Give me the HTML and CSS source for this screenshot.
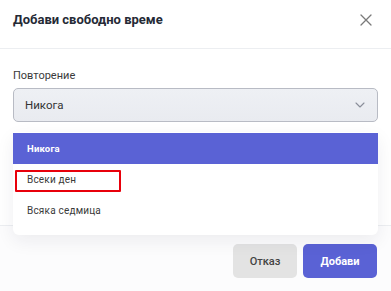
FILE: index.html
```html
<!DOCTYPE html>
<html lang="bg">
  <head>
    <meta charset="UTF-8" />
    <meta name="viewport" content="width=device-width, initial-scale=1.0" />
    <title>Добави свободно време</title>
    <link rel="stylesheet" href="styles.css">
  </head>
  <body>
    <div class="modal">
      <div class="modal-header">
        <h2>Добави свободно време</h2>
        <button class="close" aria-label="Затвори">
          <svg width="12" height="12" viewBox="0 0 12 12">
            <path d="M1 1 L11 11 M11 1 L1 11" stroke="#7a7a7a" stroke-width="1.3" fill="none" stroke-linecap="round" />
          </svg>
        </button>
      </div>

      <div class="modal-body">
        <label class="field-label">Повторение</label>
        <div class="select">
          <span>Никога</span>
          <svg width="10" height="6" viewBox="0 0 10 6">
            <path d="M1 1 L5 5 L9 1" stroke="#8a8e99" stroke-width="1.1" fill="none" stroke-linecap="round" stroke-linejoin="round" />
          </svg>
        </div>

        <ul class="options">
          <li class="option active">Никога</li>
          <li class="option">Всеки ден<span class="mark"></span></li>
          <li class="option">Всяка седмица</li>
        </ul>
      </div>

      <div class="modal-footer">
        <button class="btn btn-cancel">Отказ</button>
        <button class="btn btn-primary">Добави</button>
      </div>
    </div>
  </body>
</html>
```

FILE: styles.css
```css
body {
  margin: 0;
  font-family: Roboto, "Noto Sans", sans-serif;
  background: #fff;
  color: #333;
}
.modal {
  width: 391px;
  height: 291px;
  background: #fff;
  overflow: hidden;
}
.modal-header {
  height: 49px;
  box-sizing: border-box;
  padding: 11px 13px 0;
  display: flex;
  justify-content: space-between;
  align-items: flex-start;
  border-bottom: 1px solid #eceef1;
}
.modal-header h2 {
  margin: 0;
  font-size: 13px;
  line-height: 18px;
  font-weight: 700;
  color: #252a36;
}
.close {
  border: none;
  background: none;
  padding: 0;
  margin: 3px 6px 0 0;
  width: 12px;
  height: 12px;
  cursor: pointer;
}
.modal-body {
  position: relative;
  padding: 19px 13px 103px;
}
.field-label {
  display: block;
  font-size: 11px;
  line-height: 15px;
  color: #3a3a3a;
  margin-bottom: 5px;
}
.select {
  height: 34px;
  box-sizing: border-box;
  border: 1px solid #b8bbc4;
  border-radius: 5px;
  background: linear-gradient(#eef0f4, #e9ebf0);
  display: flex;
  align-items: center;
  justify-content: space-between;
  padding: 0 12px 0 11px;
  font-size: 11.5px;
  color: #333;
}
.options {
  position: absolute;
  top: 83px;
  left: 13px;
  right: 13px;
  margin: 0;
  padding: 1px 0 9px;
  list-style: none;
  background: #fff;
  border-radius: 0 0 6px 6px;
  box-shadow: 0 6px 18px rgba(30, 35, 60, 0.07);
}
.option {
  position: relative;
  height: 31px;
  display: flex;
  align-items: center;
  padding: 0 14px;
  font-size: 10px;
  letter-spacing: 0.2px;
  color: #3a3a3a;
}
.option.active {
  background: #5a62d5;
  color: #fff;
  font-weight: 700;
  font-size: 9.5px;
  padding-left: 14px;
}
.mark {
  position: absolute;
  left: 2px;
  top: 6px;
  width: 106px;
  height: 22px;
  box-sizing: border-box;
  border: 2px solid #e8000b;
  border-radius: 1px;
}
.modal-footer {
  border-top: 1px solid #eceef1;
  padding: 18px 14px;
  display: flex;
  justify-content: flex-end;
  gap: 6px;
  background: #fcfcfd;
}
.btn {
  height: 34px;
  border: none;
  border-radius: 5px;
  font-family: inherit;
  font-size: 11px;
  cursor: pointer;
}
.btn-cancel {
  width: 64px;
  background: #e3e3e3;
  color: #444;
  font-weight: 500;
}
.btn-primary {
  width: 74px;
  background: #5a62d5;
  color: #fff;
  font-weight: 700;
}
```
